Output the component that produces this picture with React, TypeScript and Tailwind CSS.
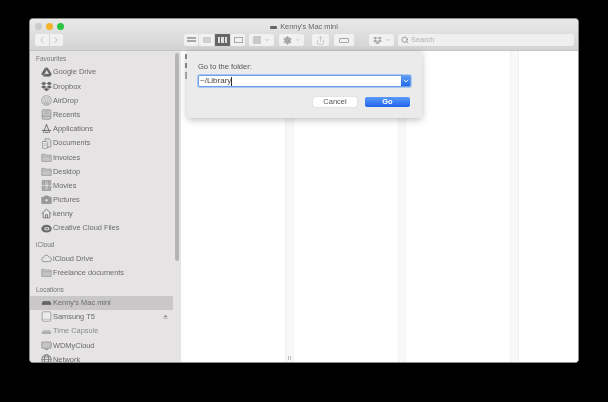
import { ChevronDown, ChevronLeft, ChevronRight, Search, Settings, Share } from 'lucide-react';
import { FaDropbox } from 'react-icons/fa';
import type { ReactNode } from 'react';

const stroke = { fill: 'none', stroke: 'currentColor', strokeWidth: 1 };

const Ico = ({ children }: { children: ReactNode }) => (
  <svg viewBox="0 0 14 14" className="w-[11px] h-[11px] shrink-0 text-[#777]">
    {children}
  </svg>
);

const FolderIcon = () => (
  <Ico>
    <path d="M1 3h4l1 1h7v8H1z" fill="#c4c4c4" stroke="#8e8e8e" strokeWidth={0.8} />
    <path d="M1 6h12" stroke="#9a9a9a" strokeWidth={0.6} />
  </Ico>
);

const DriveIcon = () => (
  <Ico>
    <path d="M3 12h8.5l2-3H5zM0.5 9l4.7-8L7 4 3 11.5zM5.5 1h3l5 8h-3.2z" fill="#666" stroke="#666" strokeWidth={0.2} />
  </Ico>
);

const AirDropIcon = () => (
  <Ico>
    <circle cx="7" cy="7" r="6.4" fill="#bdbdbd" stroke="#8e8e8e" strokeWidth={0.5} />
    <path d="M3 10a5 5 0 1 1 8 0M4.8 9a3 3 0 1 1 4.4 0" {...stroke} stroke="#eee" strokeWidth={0.8} />
    <circle cx="7" cy="7" r="1" fill="#eee" />
  </Ico>
);

const RecentsIcon = () => (
  <Ico>
    <rect x="1.5" y="1" width="11" height="12" rx="1.5" fill="#c9c9c9" stroke="#7e7e7e" strokeWidth={0.8} />
    <path d="M1.5 9h11" stroke="#7e7e7e" strokeWidth={0.8} />
    <path d="M4 3.5h6M4 5.5h6" stroke="#999" strokeWidth={0.8} />
  </Ico>
);

const AppsIcon = () => (
  <Ico>
    <path d="M7 1.5 3 12.5M7 1.5l4 11M1 9.5h12M4.5 12h5" {...stroke} stroke="#666" strokeWidth={1.1} />
  </Ico>
);

const DocsIcon = () => (
  <Ico>
    <path d="M5 1h5.5l2 2v8.5H5z" fill="#ddd" stroke="#777" strokeWidth={0.8} />
    <path d="M2 4.5h5l1 1v7.5H2z" fill="#eee" stroke="#777" strokeWidth={0.8} />
    <path d="M3.5 7.5h3M3.5 9.5h3" stroke="#888" strokeWidth={0.7} />
  </Ico>
);

const MoviesIcon = () => (
  <Ico>
    <rect x="1.5" y="1" width="11" height="12" fill="#bcbcbc" stroke="#7e7e7e" strokeWidth={0.8} />
    <path d="M1.5 7h11" stroke="#eee" strokeWidth={1} />
    <path d="M4 1v12M10 1v12" stroke="#7e7e7e" strokeWidth={0.7} />
  </Ico>
);

const PicturesIcon = () => (
  <Ico>
    <path d="M1 4h3l1-1.5h4L10 4h3v8H1z" fill="#9c9c9c" stroke="#7a7a7a" strokeWidth={0.7} />
    <circle cx="7" cy="8" r="2.4" fill="#d5d5d5" stroke="#6f6f6f" strokeWidth={0.7} />
  </Ico>
);

const HomeIcon = () => (
  <Ico>
    <path d="M0.8 7.2 7 1.5l6.2 5.7M2.8 6v6.5h8.4V6" {...stroke} stroke="#666" />
    <path d="M5.8 12.5V8.5h2.4v4" {...stroke} stroke="#666" />
  </Ico>
);

const CreativeIcon = () => (
  <Ico>
    <ellipse cx="7" cy="7.2" rx="6.6" ry="5" fill="#6c6c6c" />
    <ellipse cx="7.5" cy="7.4" rx="3.4" ry="2.2" fill="#d8d8d8" />
    <ellipse cx="7.5" cy="7.4" rx="1.5" ry="0.9" fill="#6c6c6c" />
  </Ico>
);

const CloudIcon = () => (
  <Ico>
    <path d="M3.8 11a2.7 2.7 0 0 1-.4-5.4 3.5 3.5 0 0 1 6.7-.6 3 3 0 0 1 .4 6z" {...stroke} stroke="#8a8a8a" />
  </Ico>
);

const MacMiniIcon = ({ light }: { light?: boolean }) => (
  <Ico>
    <path d="M1 8.5 2.5 5h9L13 8.5z" fill={light ? '#bdbdbd' : '#6b6b6b'} />
    <rect x="1" y="8" width="12" height="2" rx="0.6" fill={light ? '#9e9e9e' : '#555'} />
  </Ico>
);

const DriveBoxIcon = () => (
  <Ico>
    <rect x="1.5" y="1" width="11" height="12" rx="1.5" fill="#ececec" stroke="#7e7e7e" strokeWidth={0.8} />
    <path d="M1.5 10.5h11" stroke="#9a9a9a" strokeWidth={0.7} />
  </Ico>
);

const MonitorIcon = () => (
  <Ico>
    <rect x="1" y="2.5" width="12" height="8" rx="0.8" fill="#c4c4c4" stroke="#7e7e7e" strokeWidth={0.8} />
    <path d="M5 12h4" stroke="#7e7e7e" />
  </Ico>
);

const GlobeIcon = () => (
  <Ico>
    <circle cx="7" cy="7" r="6" {...stroke} stroke="#666" />
    <ellipse cx="7" cy="7" rx="2.6" ry="6" {...stroke} stroke="#666" />
    <path d="M1 7h12M2 3.8h10M2 10.2h10" {...stroke} stroke="#666" strokeWidth={0.8} />
  </Ico>
);

const Heading = ({ label }: { label: string }) => (
  <div className="h-[12px] pl-[6px] text-[6.5px] leading-[12px] text-[#777]">{label}</div>
);

const Row = ({ icon, label, active, eject, dim }: { icon: ReactNode; label: string; active?: boolean; eject?: boolean; dim?: boolean }) => (
  <div className={`h-[14.2px] flex items-center pl-[11px] pr-[5px] gap-px ${active ? 'bg-[#c9c7c7]' : ''}`}>
    {icon}
    <span className={`text-[7.4px] leading-none whitespace-nowrap ${dim ? 'text-[#8c8c8c]' : 'text-[#6a6a6a]'}`}>{label}</span>
    {eject && (
      <svg viewBox="0 0 6 6" className="ml-auto w-[5px] h-[5px] text-[#999]">
        <path d="M3 0.5 5.5 3.5h-5zM0.5 4.5h5v1h-5z" fill="currentColor" />
      </svg>
    )}
  </div>
);

const ToolBtn = ({ className, children }: { className: string; children?: ReactNode }) => (
  <div className={`h-[12px] rounded-[2px] bg-[#f1f1f1] flex items-center justify-center gap-[3px] text-[#a8a8a8] ${className}`}>
    {children}
  </div>
);

const Bars = ({ className }: { className: string }) => (
  <div className={`w-[9px] h-[6px] grid gap-px ${className}`}>
    <span className="bg-current" />
    <span className="bg-current" />
    <span className="bg-current" />
  </div>
);

const Column = ({ children, handle }: { children?: ReactNode; handle?: boolean }) => (
  <div className="w-[112.5px] shrink-0 h-full flex">
    <div className="flex-1 pt-[3px] pl-[4px] flex flex-col gap-[4px]">{children}</div>
    <div className="relative w-[8.5px] bg-[#f8f8f8] border-x border-[#f1f1f1]">
      {handle && <div className="absolute bottom-[2px] left-[2px] w-[3px] h-[4px] border-x border-[#bdbdbd]" />}
    </div>
  </div>
);

export default function App() {
  return (
    <div className="w-[608px] h-[402px] bg-black pt-[18px] pl-[29px] font-['Liberation_Sans',sans-serif] overflow-hidden">
      <div className="relative w-[550px] h-[345px] rounded-[4px] bg-white border border-[#8a8a8a] overflow-hidden flex flex-col blur-[0.3px]">
        {/* Title bar and toolbar */}
        <div className="h-[32px] shrink-0 bg-[linear-gradient(#e9e9e9,#d3d3d3)] border-b border-[#c4c4c4] flex flex-col">
          <div className="relative h-[14px] flex items-center justify-center gap-[3px] pt-[2px]">
            <div className="absolute left-[5px] top-[4px] flex gap-[4px]">
              <span className="w-[7px] h-[7px] rounded-full bg-[#cbcbcb]" />
              <span className="w-[7px] h-[7px] rounded-full bg-[#f5b42a]" />
              <span className="w-[7px] h-[7px] rounded-full bg-[#2bc53f]" />
            </div>
            <span className="w-[7px] h-[3px] rounded-[1px] bg-[#666]" />
            <span className="text-[7.4px] leading-none text-[#666]">Kenny's Mac mini</span>
          </div>
          <div className="flex items-start pt-px pl-[5px]">
            <div className="flex gap-px">
              <div className="w-[13.5px] h-[12px] rounded-l-[2px] bg-[#f1f1f1] flex items-center justify-center text-[#8a8a8a]">
                <ChevronLeft size={10} strokeWidth={1.2} />
              </div>
              <div className="w-[13.5px] h-[12px] rounded-r-[2px] bg-[#f1f1f1] flex items-center justify-center text-[#8a8a8a]">
                <ChevronRight size={10} strokeWidth={1.2} />
              </div>
            </div>
            <div className="ml-[121px] flex gap-px">
              <ToolBtn className="w-[14px] rounded-r-none"><Bars className="grid-rows-2" /></ToolBtn>
              <ToolBtn className="w-[15px] rounded-none"><div className="w-[8px] h-[6px] bg-[#cfcfcf]" /></ToolBtn>
              <div className="w-[15px] h-[12px] bg-[#666] text-[#ddd] flex items-center justify-center"><Bars className="grid-cols-3" /></div>
              <ToolBtn className="w-[14px] rounded-l-none"><div className="w-[9px] h-[6px] border border-current" /></ToolBtn>
            </div>
            <ToolBtn className="w-[25px] ml-[4px]">
              <div className="w-[8px] h-[8px] bg-[#c9c9c9]" />
              <ChevronDown size={6} />
            </ToolBtn>
            <ToolBtn className="w-[25px] ml-[5px]">
              <Settings size={9} className="text-[#8f8f8f]" fill="#b5b5b5" />
              <ChevronDown size={6} />
            </ToolBtn>
            <ToolBtn className="w-[17px] ml-[8px]"><Share size={9} strokeWidth={1.4} /></ToolBtn>
            <ToolBtn className="w-[20px] ml-[5px]"><div className="w-[10px] h-[5px] rounded-[1px] border border-current" /></ToolBtn>
            <ToolBtn className="w-[25px] ml-[15px]">
              <FaDropbox size={9} />
              <ChevronDown size={6} />
            </ToolBtn>
            <div className="w-[176px] ml-[4px] h-[12px] rounded-[2px] bg-[#efefef] flex items-center pl-[3px] gap-[2px]">
              <Search size={8} className="text-[#777]" />
              <span className="text-[7.4px] leading-none text-[#b0b0b0]">Search</span>
            </div>
          </div>
        </div>

        {/* Body */}
        <div className="flex-1 flex min-h-0">
          <div className="relative w-[151px] shrink-0 bg-[#e5e3e3] overflow-hidden pt-[2px]">
            <div className="absolute right-[2px] top-[2px] w-[4px] h-[208px] rounded-full bg-[#b5b4b4]" />
            <Heading label="Favourites" />
            <div className="w-[143px]">
              <Row icon={<DriveIcon />} label="Google Drive" />
              <Row icon={<FaDropbox className="w-[11px] h-[11px] shrink-0 text-[#666]" />} label="Dropbox" />
              <Row icon={<AirDropIcon />} label="AirDrop" />
              <Row icon={<RecentsIcon />} label="Recents" />
              <Row icon={<AppsIcon />} label="Applications" />
              <Row icon={<DocsIcon />} label="Documents" />
              <Row icon={<FolderIcon />} label="Invoices" />
              <Row icon={<FolderIcon />} label="Desktop" />
              <Row icon={<MoviesIcon />} label="Movies" />
              <Row icon={<PicturesIcon />} label="Pictures" />
              <Row icon={<HomeIcon />} label="kenny" />
              <Row icon={<CreativeIcon />} label="Creative Cloud Files" />
              <div className="h-[4px]" />
              <Heading label="iCloud" />
              <Row icon={<CloudIcon />} label="iCloud Drive" />
              <Row icon={<FolderIcon />} label="Freelance documents" />
              <div className="h-[4px]" />
              <Heading label="Locations" />
              <Row icon={<MacMiniIcon />} label="Kenny's Mac mini" active />
              <Row icon={<DriveBoxIcon />} label="Samsung T5" eject />
              <Row icon={<MacMiniIcon light />} label="Time Capsule" dim />
              <Row icon={<MonitorIcon />} label="WDMyCloud" />
              <Row icon={<GlobeIcon />} label="Network" />
            </div>
          </div>
          <div className="flex-1 flex min-w-0 bg-white">
            <div className="w-[104px] shrink-0 flex">
              <Column handle>
                <span className="w-[2px] h-[5px] bg-[#8f8f8f]" />
                <span className="w-[2px] h-[5px] bg-[#8f8f8f]" />
                <span className="w-[2px] h-[7px] bg-[#b5b5b5]" />
              </Column>
            </div>
            <div className="w-[8.5px] shrink-0" />
            <Column />
            <Column />
          </div>
        </div>

        {/* Go to the folder sheet */}
        <div className="absolute left-[157px] top-[32px] w-[235px] h-[67px] bg-[#ecebeb] rounded-b-[3px] shadow-[0_2px_7px_rgba(0,0,0,0.25)] px-[11px] pt-[10px]">
          <div className="text-[7.5px] leading-[11px] text-[#555]">Go to the folder:</div>
          <div className="mt-[3px] h-[12px] flex rounded-[2px] bg-white border border-[#6d9fe6] shadow-[0_0_0_1px_#a9c8f2]">
            <div className="flex-1 flex items-center pl-px text-[8px] leading-none text-[#444]">
              ~/Library<span className="w-px h-[9px] bg-[#333]" />
            </div>
            <div className="w-[9px] bg-[linear-gradient(#5b9bf7,#2468e8)] flex items-center justify-center text-white">
              <ChevronDown size={8} strokeWidth={2.5} />
            </div>
          </div>
          <div className="mt-[10px] pr-px flex justify-end gap-[8px]">
            <div className="w-[44px] h-[10px] rounded-[2px] bg-white text-[7.5px] leading-[10px] text-center text-[#555] shadow-[0_0_1px_rgba(0,0,0,0.3)]">Cancel</div>
            <div className="w-[45px] h-[10px] rounded-[2px] bg-[linear-gradient(#5b9bf7,#1f63ee)] text-[7.5px] font-bold leading-[10px] text-center text-white">Go</div>
          </div>
        </div>
      </div>
    </div>
  );
}
